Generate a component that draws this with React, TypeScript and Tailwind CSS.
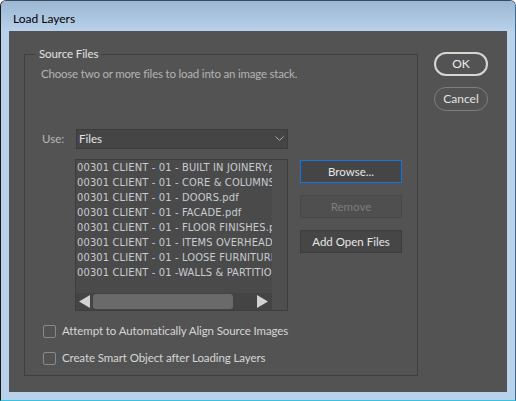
import React from "react";

const files = [
  "00301 CLIENT - 01 - BUILT IN JOINERY.pdf",
  "00301 CLIENT - 01 - CORE & COLUMNS.pdf",
  "00301 CLIENT - 01 - DOORS.pdf",
  "00301 CLIENT - 01 - FACADE.pdf",
  "00301 CLIENT - 01 - FLOOR FINISHES.pdf",
  "00301 CLIENT - 01 - ITEMS OVERHEAD.pdf",
  "00301 CLIENT - 01 - LOOSE FURNITURE.pdf",
  "00301 CLIENT - 01 -WALLS & PARTITIONS.pdf",
];

const ui = { fontFamily: 'Lato, "Noto Sans", sans-serif' };
const listFont = { fontFamily: '"DejaVu Sans Condensed", "DejaVu Sans", sans-serif', fontStretch: "condensed" as const };

function Checkbox({ label }: { label: string }) {
  return (
    <div className="flex items-center h-[14px]">
      <div className="w-[13px] h-[13px] border border-[#8a8a8a] rounded-[2px] bg-[#535353]" />
      <span className="ml-[6px] text-[11.5px] tracking-[-0.1px] leading-[16px] text-[#d6d6d6]">{label}</span>
    </div>
  );
}

export default function App() {
  return (
    <div className="w-[516px] h-[401px] overflow-hidden bg-white" style={ui}>
      <div className="w-[516px] h-[401px] flex flex-col rounded-t-[6px] border border-t-[#3a4a5a] border-l-[#1a1a1a] border-r-[#3b6f8f] border-b-[#2fc6e6] bg-[#b9d1ea]">
        <div className="h-[30px] shrink-0 flex items-start pt-[10px] pl-[12px] rounded-t-[5px] bg-gradient-to-b from-[#9cb7d4] to-[#b9d1ea]">
          <span className="text-[12px] leading-[16px] text-black">Load Layers</span>
        </div>
        <div className="flex-1 px-[8px] pb-[8px] flex">
          <div className="flex-1 bg-[#535353] flex pl-[15px] pt-[23px]">
            {/* Group box */}
            <div className="relative w-[394px] h-[322px] border border-[#3f3f3f] flex flex-col pl-[16px]">
              <span className="absolute left-[11px] top-[-9px] px-[3px] bg-[#535353] text-[11.5px] tracking-[-0.1px] leading-[16px] text-[#e2e2e2]">
                Source Files
              </span>
              <div className="mt-[11px] text-[11.5px] tracking-[-0.2px] leading-[16px] text-[#b4b4b4]">
                Choose two or more files to load into an image stack.
              </div>
              <div className="mt-[47px] flex items-center">
                <span className="w-[34px] ml-[1px] text-[11.5px] leading-[16px] text-[#b8b8b8]">Use:</span>
                <div className="w-[212px] h-[20px] border border-[#3b3b3b] bg-[#454545] flex items-center pl-[2px] pr-[3px]">
                  <span className="flex-1 text-[11.5px] leading-[16px] text-[#e4e4e4]">Files</span>
                  <svg width="9" height="6" viewBox="0 0 9 6">
                    <polyline points="0.5,0.5 4.5,4.5 8.5,0.5" fill="none" stroke="#a8a8a8" strokeWidth="1" />
                  </svg>
                </div>
              </div>
              <div className="mt-[10px] flex">
                {/* List */}
                <div className="ml-[34px] w-[213px] h-[152px] border border-[#3d3d3d] bg-[#4a4a4a] flex">
                  <div className="w-[196px] flex flex-col">
                    <div className="flex-1 overflow-hidden pl-[1px]">
                      {files.map((f) => (
                        <div
                          key={f}
                          className="h-[15px] leading-[15px] whitespace-nowrap text-[11px] tracking-[0.15px] text-[#c9ccd2]"
                          style={listFont}
                        >
                          {f}
                        </div>
                      ))}
                    </div>
                    <div className="h-[17px] bg-[#444444] flex items-center">
                      <svg width="17" height="17" viewBox="0 0 17 17" className="shrink-0">
                        <polygon points="3,8.5 14,2 14,15" fill="#d2d2d2" />
                      </svg>
                      <div className="w-[140px] h-[15px] rounded-[3px] bg-[#6a6a6a]" />
                      <div className="flex-1" />
                      <svg width="17" height="17" viewBox="0 0 17 17" className="shrink-0">
                        <polygon points="2,2 13,8.5 2,15" fill="#d2d2d2" />
                      </svg>
                    </div>
                  </div>
                  <div className="flex-1 bg-[#4f4f4f]" />
                </div>
                {/* Buttons */}
                <div className="ml-[12px] mt-[1px] flex flex-col gap-[12px]">
                  <div className="w-[102px] h-[23px] border border-[#1473e6] bg-[#454545] flex items-center justify-center text-[11.5px] text-[#e6e6e6]">
                    Browse...
                  </div>
                  <div className="w-[102px] h-[23px] border border-[#484848] bg-[#4f4f4f] flex items-center justify-center text-[11.5px] text-[#7c7c7c]">
                    Remove
                  </div>
                  <div className="w-[102px] h-[23px] border border-[#3c3c3c] bg-[#464646] flex items-center justify-center text-[11.5px] text-[#e6e6e6]">
                    Add Open Files
                  </div>
                </div>
              </div>
              <div className="mt-[13px] ml-[2px] flex flex-col gap-[13px]">
                <Checkbox label="Attempt to Automatically Align Source Images" />
                <Checkbox label="Create Smart Object after Loading Layers" />
              </div>
            </div>
            {/* OK / Cancel */}
            <div className="ml-[16px] mt-[-2px] flex flex-col gap-[11px]">
              <div className="w-[54px] h-[24px] rounded-full border-2 border-[#d6d6d6] flex items-center justify-center text-[12px] text-[#ececec]">
                OK
              </div>
              <div className="w-[54px] h-[24px] rounded-full border border-[#7e7e7e] flex items-center justify-center text-[12px] text-[#e2e2e2]">
                Cancel
              </div>
            </div>
          </div>
        </div>
      </div>
    </div>
  );
}
